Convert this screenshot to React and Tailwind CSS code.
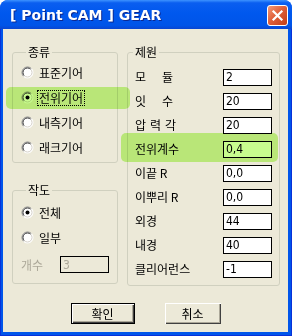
import React from "react";

const KR = "font-['Noto_Sans_CJK_KR','Noto_Sans_CJK_SC',sans-serif]";

function Radio({ checked }) {
  return (
    <svg width="13" height="13" viewBox="0 0 13 13" className="shrink-0">
      <circle cx="6.5" cy="6.5" r="5.5" fill="#ffffff" />
      <path d="M2.611 10.389 A5.5 5.5 0 0 1 10.389 2.611" fill="none" stroke="#808080" strokeWidth="1" />
      <path d="M10.389 2.611 A5.5 5.5 0 0 1 2.611 10.389" fill="none" stroke="#ffffff" strokeWidth="1" />
      <path d="M3.318 9.682 A4.5 4.5 0 0 1 9.682 3.318" fill="none" stroke="#404040" strokeWidth="1" />
      <path d="M9.682 3.318 A4.5 4.5 0 0 1 3.318 9.682" fill="none" stroke="#d4d0c8" strokeWidth="1" />
      {checked && <circle cx="6.5" cy="6.5" r="2" fill="#000000" />}
    </svg>
  );
}

function RadioRow({ label, checked, focused }) {
  return (
    <div className="flex h-[25px] items-center gap-[4px]">
      <Radio checked={checked} />
      <span
        className={
          "text-[12px] leading-[14px] px-[1px] " +
          (focused ? "outline outline-1 outline-dotted outline-black" : "")
        }
      >
        {label}
      </span>
    </div>
  );
}

function Field({ label, value }) {
  return (
    <div className="flex h-[24px] items-center justify-between pl-[7px] pr-[7px]">
      <div className="flex text-[12px] leading-[14px]">{label}</div>
      <div className="flex h-[17px] w-[49px] items-center border border-black bg-white pl-[2px] font-['DejaVu_Sans_Condensed','Liberation_Sans_Narrow','Liberation_Sans',sans-serif] text-[12px] leading-[14px] text-black">
        {value}
      </div>
    </div>
  );
}

export default function App() {
  return (
    <div className={"relative flex h-[336px] w-[292px] flex-col overflow-hidden rounded-t-[8px] bg-[#0055ea] " + KR}>
      {/* title bar */}
      <div className="flex h-[29px] shrink-0 items-start justify-between bg-[linear-gradient(180deg,#3d93ff_0%,#0a5ef0_10%,#0058ee_45%,#0054e8_88%,#0a45d0_100%)] pl-[10px] pr-[4px]">
        <div className="pt-[7px] font-['DejaVu_Sans',sans-serif] text-[14px] font-bold leading-[17px] text-white [text-shadow:1px_1px_0_#0c2890]">
          [ Point CAM ] GEAR
        </div>
        <div className="mt-[5px] flex h-[21px] w-[21px] items-center justify-center rounded-[3px] border border-white bg-[linear-gradient(135deg,#f39a78_0%,#e0603a_45%,#c23c16_100%)]">
          <svg width="13" height="13" viewBox="0 0 13 13">
            <path d="M2.5 2.5 L10.5 10.5 M10.5 2.5 L2.5 10.5" stroke="#ffffff" strokeWidth="2.2" strokeLinecap="square" />
          </svg>
        </div>
      </div>

      {/* frame */}
      <div className="flex flex-1 flex-col border-x border-b border-[#0831d9] pb-[3px] pl-[2px] pr-[3px]">
        <div className="flex flex-1 flex-col bg-[#ece9d8] text-black">
          <div className="flex gap-[9px] pl-[9px] pt-[16px]">
            {/* left column */}
            <div className="flex w-[106px] flex-col">
              <fieldset className="h-[118px] rounded-[3px] border border-[#d0d0bf] pl-[8px]">
                <legend className="ml-[5px] px-[2px] text-[12px] leading-[14px]">종류</legend>
                <div className="mt-[1px] flex flex-col">
                  <RadioRow label="표준기어" />
                  <RadioRow label="전위기어" checked focused />
                  <RadioRow label="내측기어" />
                  <RadioRow label="래크기어" />
                </div>
              </fieldset>
              <fieldset className="mt-[20px] h-[101px] rounded-[3px] border border-[#d0d0bf] pl-[8px]">
                <legend className="ml-[5px] px-[2px] text-[12px] leading-[14px]">작도</legend>
                <div className="mt-[3px] flex flex-col">
                  <RadioRow label="전체" checked />
                  <RadioRow label="일부" />
                  <div className="mt-[2px] flex h-[25px] items-center justify-between pr-[8px]">
                    <span className="text-[12px] leading-[14px] text-[#aca899]">개수</span>
                    <div className="flex h-[17px] w-[49px] items-center border border-black bg-[#ece9d8] pl-[2px] font-['DejaVu_Sans_Condensed','Liberation_Sans_Narrow','Liberation_Sans',sans-serif] text-[12px] leading-[14px] text-[#aca899]">
                      3
                    </div>
                  </div>
                </div>
              </fieldset>
            </div>

            {/* right column */}
            <fieldset className="h-[241px] w-[153px] rounded-[3px] border border-[#d0d0bf]">
              <legend className="ml-[5px] px-[2px] text-[12px] leading-[14px]">제원</legend>
              <div className="mt-[6px] flex flex-col">
                <Field label={<><span className="w-[27px]">모</span><span>듈</span></>} value="2" />
                <Field label={<><span className="w-[27px]">잇</span><span>수</span></>} value="20" />
                <Field label={<><span className="w-[15px]">압</span><span className="w-[15px]">력</span><span>각</span></>} value="20" />
                <Field label="전위계수" value="0,4" />
                <Field label="이끝 R" value="0,0" />
                <Field label="이뿌리 R" value="0,0" />
                <Field label="외경" value="44" />
                <Field label="내경" value="40" />
                <Field label="클리어런스" value="-1" />
              </div>
            </fieldset>
          </div>

          {/* buttons */}
          <div className="mt-[17px] flex justify-center gap-[30px]">
            <button className="flex h-[21px] w-[64px] items-center justify-center border border-black bg-[#ece9d8] text-[12px] leading-[14px] shadow-[inset_1px_1px_0_#ffffff,inset_-1px_-1px_0_#404040,inset_-2px_-2px_0_#aca899]">
              확인
            </button>
            <button className="flex h-[21px] w-[56px] items-center justify-center bg-[#ece9d8] text-[12px] leading-[14px] shadow-[inset_1px_1px_0_#ffffff,inset_-1px_-1px_0_#404040,inset_-2px_-2px_0_#aca899]">
              취소
            </button>
          </div>
        </div>
      </div>

      {/* highlighter marks */}
      <div className="pointer-events-none absolute left-[6px] top-[87px] h-[22px] w-[124px] rounded-[5px] bg-[#c8fc8e] mix-blend-multiply" />
      <div className="pointer-events-none absolute left-[121px] top-[133px] h-[29px] w-[157px] rounded-[5px] bg-[#c8fc8e] mix-blend-multiply" />
    </div>
  );
}
